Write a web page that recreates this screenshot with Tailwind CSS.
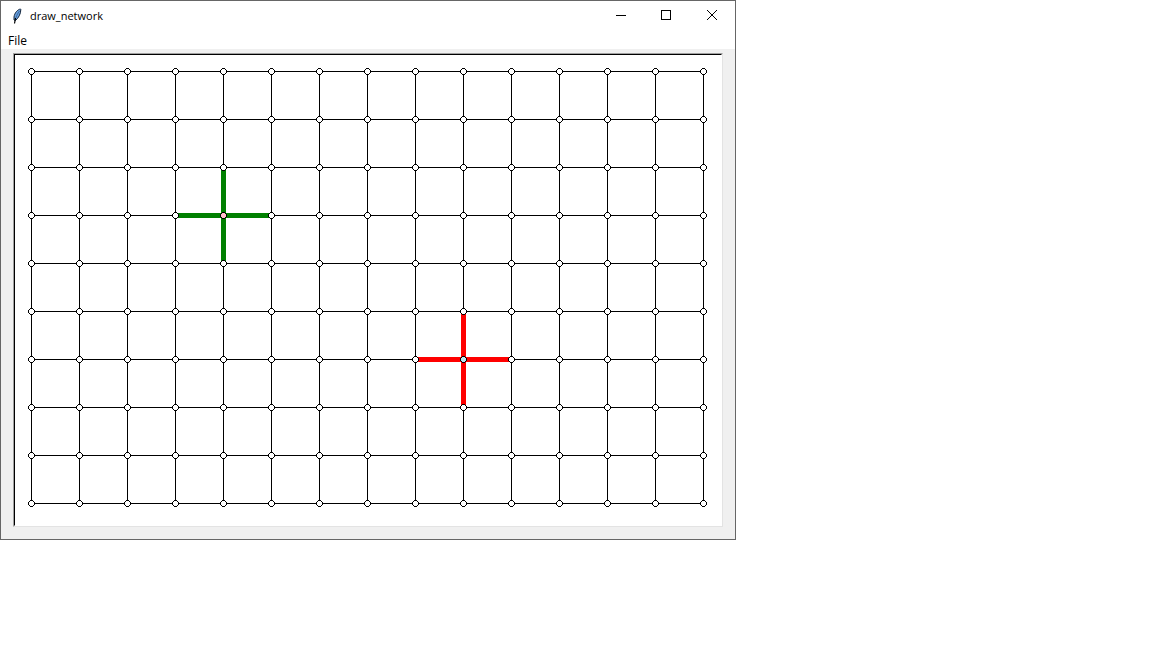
<!DOCTYPE html>
<html lang="en">
<head>
<meta charset="utf-8">
<meta name="viewport" content="width=device-width, initial-scale=1">
<title>draw_network</title>
<script src="https://cdn.jsdelivr.net/npm/@tailwindcss/browser@4"></script>
</head>
<body class="bg-white font-['Open_Sans',sans-serif] text-[11px] text-black">
<main class="flex w-fit flex-col border border-[#666666] bg-[#f0f0f0]">
  <header class="flex h-[30px] items-center bg-white pl-2">
    <svg class="mr-1 size-4" viewBox="0 0 16 16" aria-hidden="true">
      <path d="M11.500 1C8.500 1.500 5.500 5 5 9L5 12L6.500 12.500C9.500 10 11.800 6 11.800 1.500Z" fill="#68a0e0" stroke="#15263c" stroke-width="1"/>
      <path d="M10.500 3C8.500 5.500 7 8.500 6.200 12.500" fill="none" stroke="#305888" stroke-width="0.800"/>
      <path d="M6.500 10L5.500 15.500" stroke="#000" stroke-width="1.200"/>
    </svg>
    <h1 class="grow pl-px">draw_network</h1>
    <div class="flex self-stretch">
      <button type="button" aria-label="Minimize" class="grid w-[46px] place-items-center pb-0.5"><svg class="size-3" viewBox="0 0 12 12" shape-rendering="crispEdges"><path d="M2 6.500H12" stroke="#000"/></svg></button>
      <button type="button" aria-label="Maximize" class="grid w-[46px] place-items-center pb-0.5"><svg class="size-3" viewBox="0 0 12 12" shape-rendering="crispEdges"><path d="M1.500 1.500H10.500V10.500H1.500Z" fill="none" stroke="#000"/></svg></button>
      <button type="button" aria-label="Close" class="grid w-[46px] place-items-center pb-0.5"><svg class="size-3" viewBox="0 0 12 12"><path d="M1 1L11 11M11 1L1 11" stroke="#000"/></svg></button>
    </div>
  </header>
  <nav class="flex h-[18px] items-end bg-white pl-[7px]"><button type="button" class="text-xs">File</button></nav>
  <section class="mx-3 mt-1 mb-3 border border-t-[#a0a0a0] border-r-[#e3e3e3] border-b-[#e3e3e3] border-l-[#a0a0a0]">
    <div class="border border-t-black border-r-white border-b-white border-l-black bg-white">
      <svg id="network" class="block" width="706" height="470" viewBox="0 0 706 470" shape-rendering="crispEdges" role="img" aria-label="Network grid">
        <g id="lines" stroke="#000"></g>
        <path d="M160.500 160.500H256.500M208.500 112.500V208.500" stroke="#008000" stroke-width="5"/>
        <path d="M400.500 304.500H496.500M448.500 256.500V352.500" stroke="#ff0000" stroke-width="5"/>
        <g id="nodes"></g>
      </svg>
    </div>
  </section>
</main>
<script>
  const NS = 'http://www.w3.org/2000/svg';
  const STEP = 48, COLS = 15, ROWS = 10, X0 = 16.5, Y0 = 16.5;
  const add = (parent, tag, attrs) => {
    const el = document.createElementNS(NS, tag);
    for (const k in attrs) el.setAttribute(k, attrs[k]);
    document.getElementById(parent).append(el);
  };
  const right = X0 + STEP * (COLS - 1), bottom = Y0 + STEP * (ROWS - 1);
  for (let c = 0; c < COLS; c++) add('lines', 'path', { d: `M${X0 + c * STEP} ${Y0}V${bottom}` });
  for (let r = 0; r < ROWS; r++) add('lines', 'path', { d: `M${X0} ${Y0 + r * STEP}H${right}` });
  // Seven-pixel node: a stepped black rim around a stepped fill.
  const RIM = 'h3v1h1v1h1v3h-1v1h-1v1h-3v-1h-1v-1h-1v-3h1v-1h1z';
  const CORE = 'h3v1h1v3h-1v1h-3v-1h-1v-3h1z';
  const special = { '4,3': '#ffc0cb', '9,6': '#b8e6f0' };
  for (let r = 0; r < ROWS; r++)
    for (let c = 0; c < COLS; c++) {
      const x = X0 + c * STEP - 1.5, y = Y0 + r * STEP - 3.5;
      add('nodes', 'path', { d: `M${x} ${y}${RIM}`, fill: '#000' });
      add('nodes', 'path', { d: `M${x} ${y + 1}${CORE}`, fill: special[c + ',' + r] || '#fff' });
    }
</script>
</body>
</html>
